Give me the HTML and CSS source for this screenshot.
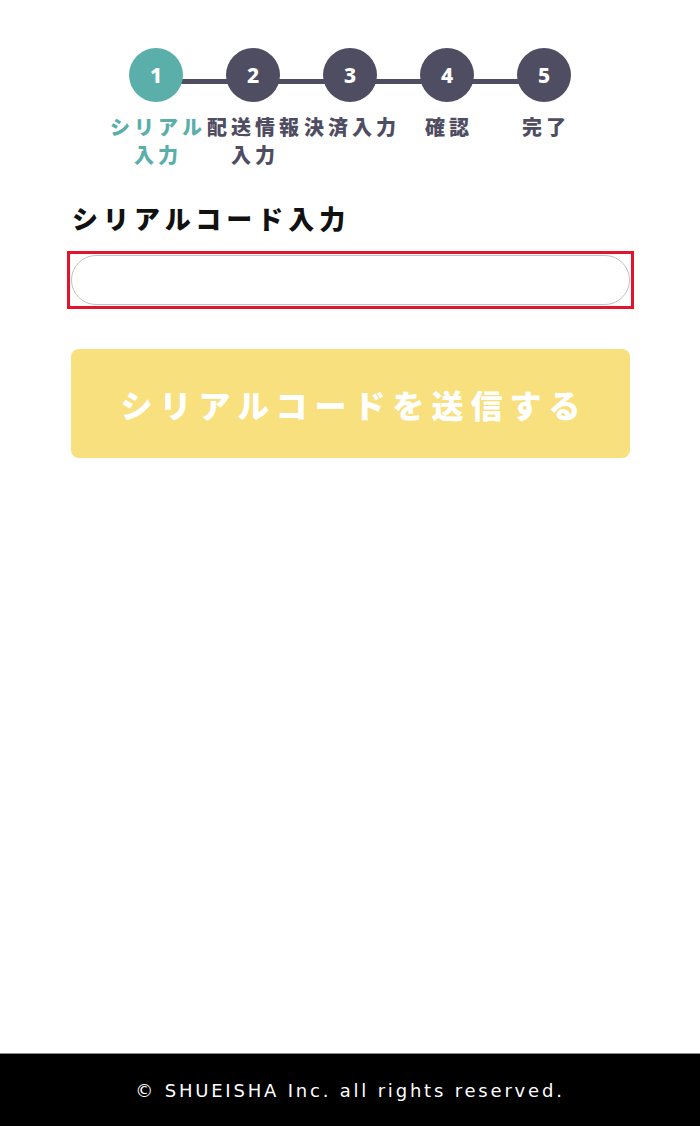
FILE: index.html
```html
<!DOCTYPE html>
<html lang="ja">
<head>
<meta charset="utf-8">
<title>シリアルコード入力</title>
<link rel="stylesheet" href="styles.css">
</head>
<body>
<div class="page">
  <main class="main">
    <ol class="stepper">
      <li class="step is-current"><span class="num">1</span><span class="label">シリアル入力</span></li>
      <li class="step"><span class="num">2</span><span class="label">配送情報入力</span></li>
      <li class="step"><span class="num">3</span><span class="label">決済入力</span></li>
      <li class="step"><span class="num">4</span><span class="label">確認</span></li>
      <li class="step"><span class="num">5</span><span class="label">完了</span></li>
    </ol>
    <section class="form">
      <h1 class="title">シリアルコード入力</h1>
      <div class="field"><input class="input" type="text" aria-label="シリアルコード"></div>
      <button class="submit" type="button">シリアルコードを送信する</button>
    </section>
  </main>
  <footer class="footer">© SHUEISHA Inc. all rights reserved.</footer>
</div>
</body>
</html>
```
FILE: styles.css
```css
html, body {
  margin: 0;
  padding: 0;
  background: #fff;
}
body {
  font-family: "Noto Sans CJK JP", "Noto Sans", sans-serif;
}
.page {
  min-height: 100vh;
  display: flex;
  flex-direction: column;
}
.main {
  flex: 1;
}
.stepper {
  list-style: none;
  margin: 0;
  padding: 48px 0 0;
  display: flex;
  justify-content: center;
}
.step {
  position: relative;
  width: 97px;
  display: flex;
  flex-direction: column;
  align-items: center;
  color: #4f4d62;
}
.step + .step::before {
  content: "";
  position: absolute;
  top: 31px;
  left: -50%;
  width: 100%;
  height: 5px;
  background: #4f4d62;
  z-index: 0;
}
.num {
  position: relative;
  z-index: 1;
  width: 54px;
  height: 54px;
  border-radius: 50%;
  background: #4f4d62;
  color: #fff;
  font-family: "Noto Sans", sans-serif;
  font-weight: 800;
  font-size: 21px;
  display: flex;
  align-items: center;
  justify-content: center;
}
.label {
  margin-top: 11px;
  font-size: 20px;
  font-weight: 800;
  line-height: 28px;
  letter-spacing: 4px;
  text-align: center;
  width: 100px;
  padding-left: 4px;
  box-sizing: border-box;
}
.is-current .num {
  background: #5aafab;
}
.is-current .label {
  color: #5aafab;
}
.form {
  padding: 31px 70px 0 71px;
}
.title {
  margin: 0 0 15px;
  font-size: 26px;
  line-height: 36px;
  font-weight: 900;
  letter-spacing: 5px;
  color: #111;
  padding-left: 1px;
}
.field {
  display: flex;
  margin: 0 -4px;
  border: 3px solid #e4132e;
  padding: 1px;
}
.input {
  flex: 1;
  height: 50px;
  box-sizing: border-box;
  border: 1px solid #c2c2c2;
  border-radius: 25px;
  outline: none;
  padding: 0 20px;
  font-size: 18px;
  background: #fff;
}
.submit {
  display: block;
  width: 100%;
  height: 109px;
  margin-top: 40px;
  border: none;
  border-radius: 8px;
  background: #f8e07f;
  color: #fff;
  font-family: "Noto Sans CJK JP", sans-serif;
  font-size: 32px;
  font-weight: 800;
  letter-spacing: 7px;
  padding: 0 0 0 7px;
}
.footer {
  border-top: 1px solid #8a8a8a;
  background: #000;
  color: #fff;
  height: 72px;
  display: flex;
  align-items: center;
  justify-content: center;
  font-family: "DejaVu Sans", Verdana, sans-serif;
  font-size: 18px;
  letter-spacing: 2.8px;
}
```
